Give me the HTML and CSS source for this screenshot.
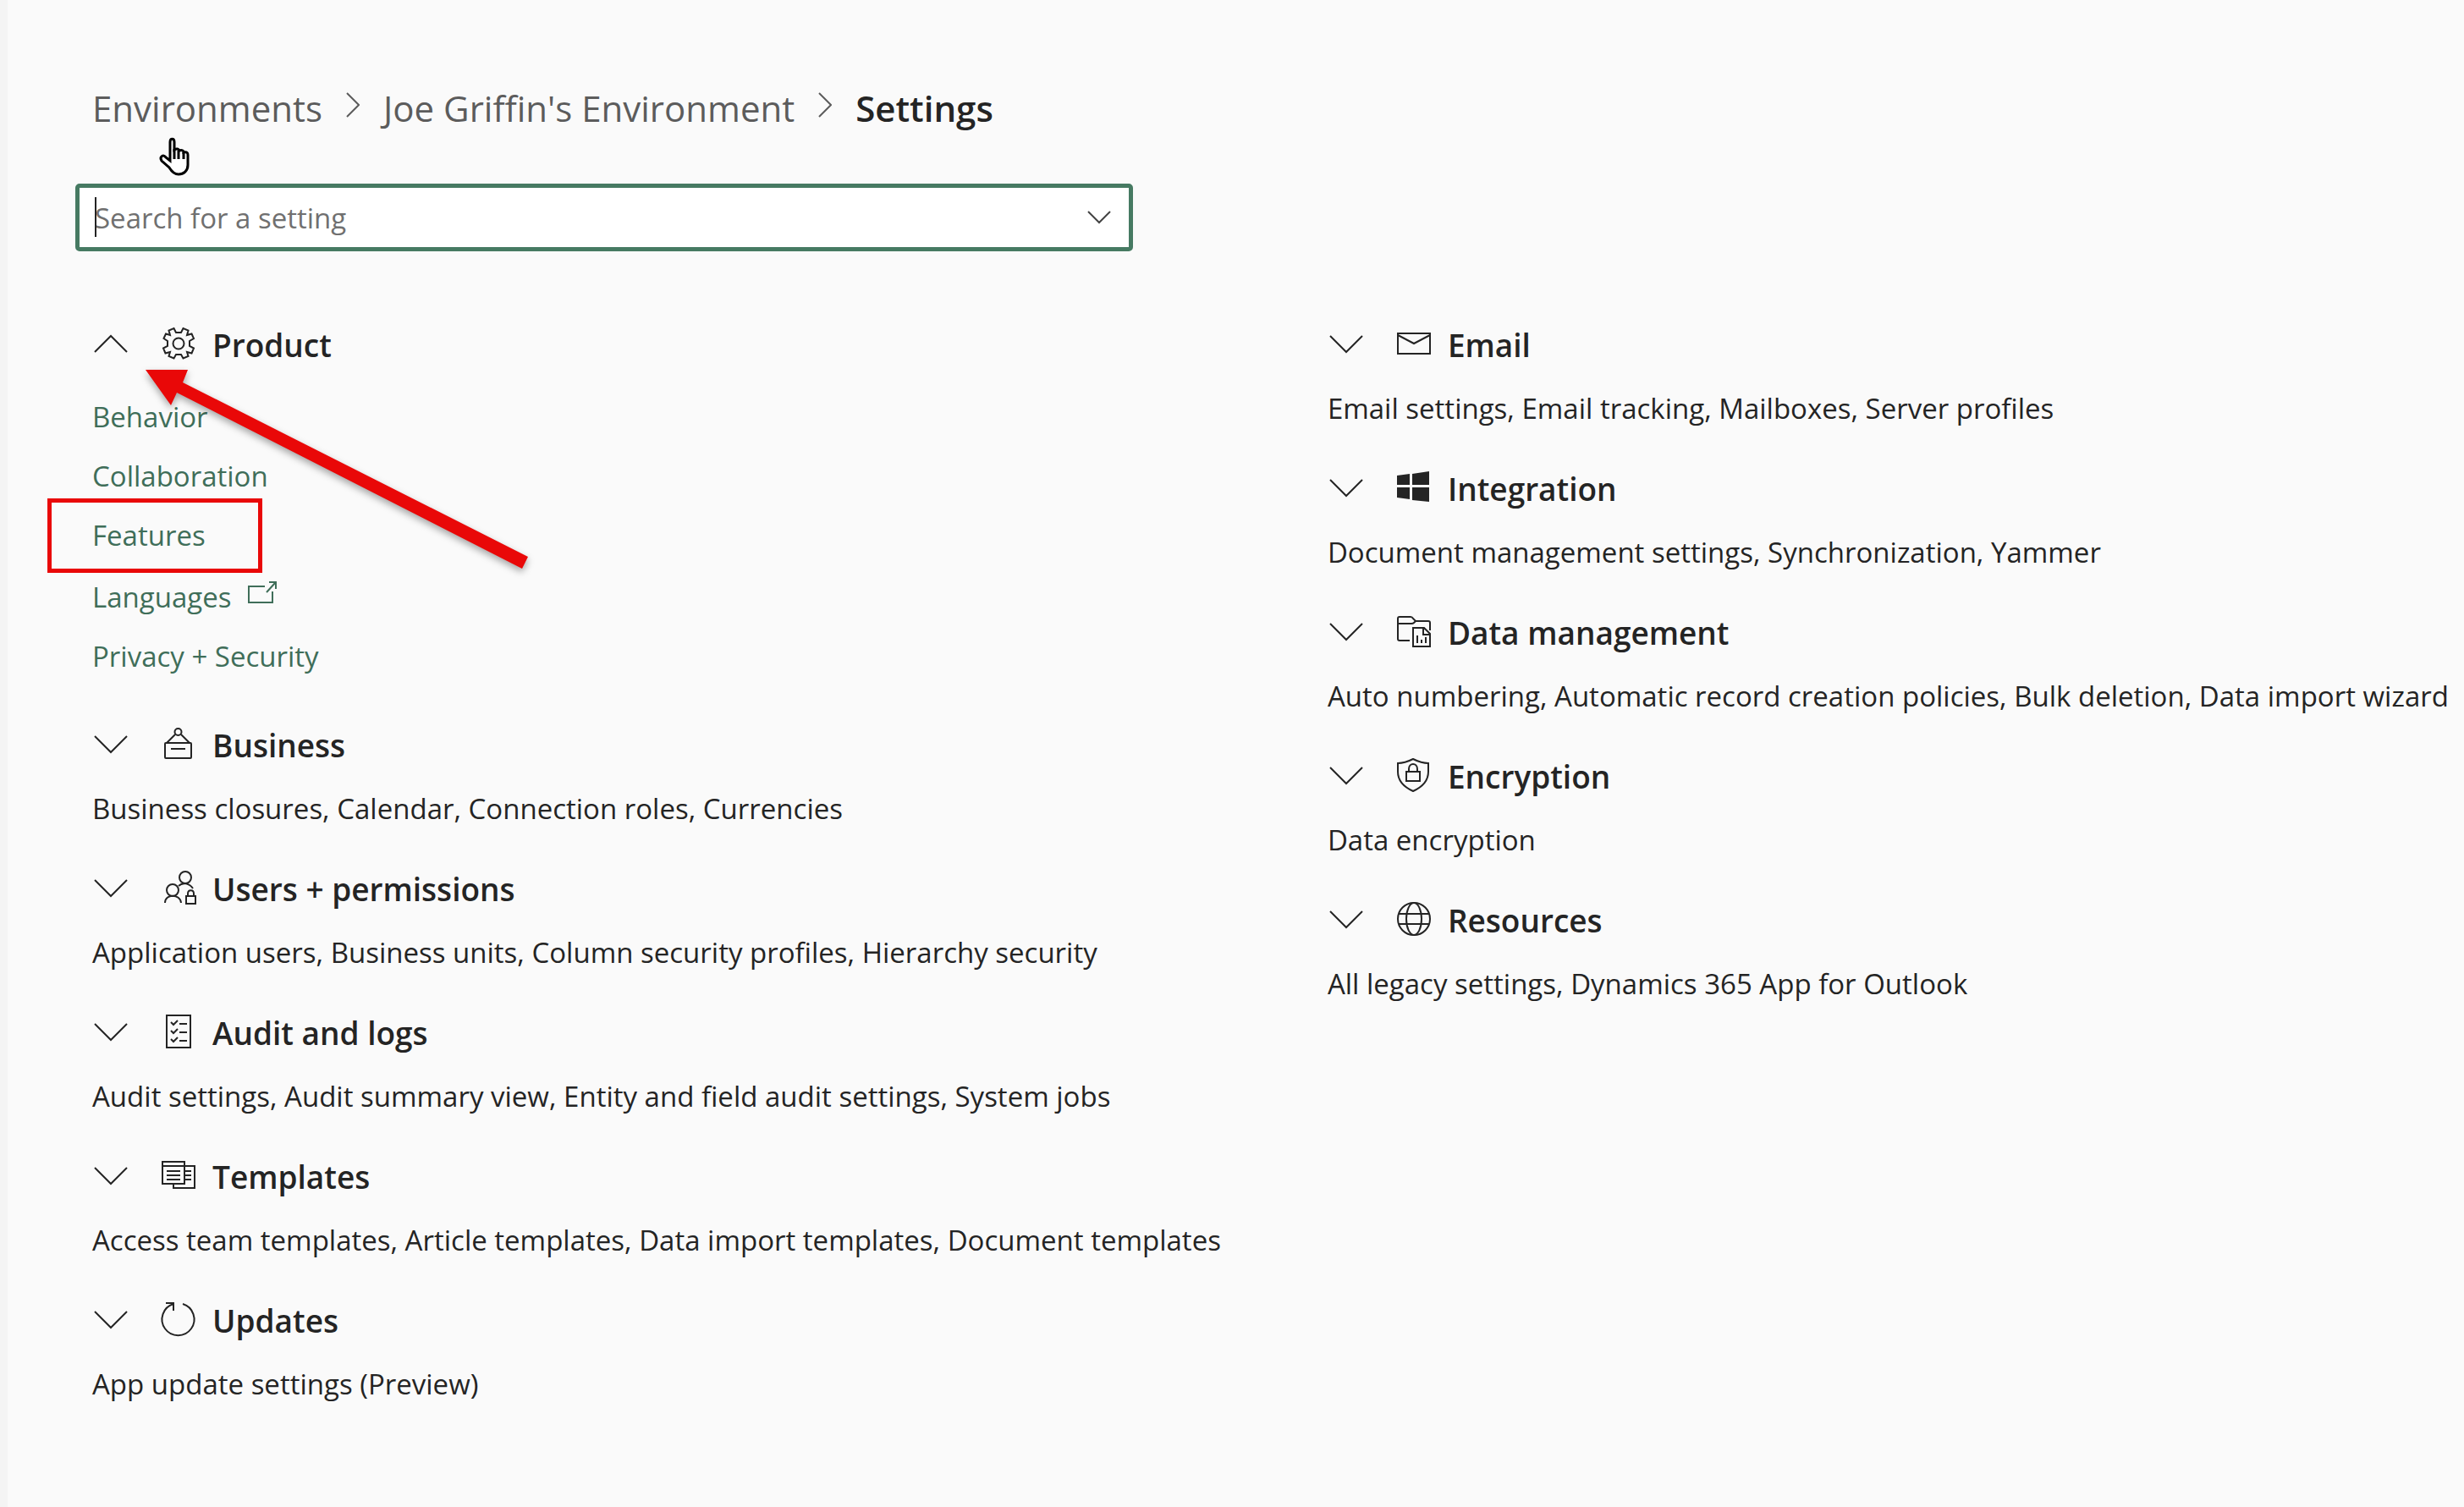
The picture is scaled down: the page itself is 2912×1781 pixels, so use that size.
FILE: index.html
```html
<!DOCTYPE html>
<html lang="en">
<head>
<meta charset="utf-8">
<title>Settings</title>
<link rel="stylesheet" href="styles.css">
</head>
<body>
<svg class="sprite" aria-hidden="true">
  <symbol id="down" viewBox="0 0 40 40"><path d="M1 10 20 29 39 10"/></symbol>
  <symbol id="up" viewBox="0 0 40 40"><path d="M1 29 20 10 39 29"/></symbol>
  <symbol id="next" viewBox="0 0 16 30"><path d="M1 1 15 15 1 29"/></symbol>
</svg>
<main class="page">
  <nav class="crumbs" aria-label="Breadcrumb">
    <a href="#">Environments</a>
    <svg class="crumb-sep"><use href="#next"/></svg>
    <a href="#">Joe Griffin's Environment</a>
    <svg class="crumb-sep"><use href="#next"/></svg>
    <span class="current" aria-current="page">Settings</span>
    <svg class="pointer" viewBox="0 0 36 46" aria-hidden="true"><path d="M12 27V5c0-5 5-5 5 0v9c3-2 5-1 6 1 3-1 5 0 5 2 4-1 5 1 5 3v12c0 7-5 11-11 11-5 0-8-3-11-8L2 27c-3-5 2-8 5-4z"/><path class="fingers" d="M17 13v12M22 15v10M28 17v8"/></svg>
  </nav>
  <div class="search">
    <input type="text" id="search" aria-label="Search for a setting" placeholder="Search for a setting">
    <span class="caret"></span>
    <button type="button" class="drop" aria-label="Show settings"><svg viewBox="0 0 28 16"><path d="M1 1 14 14 27 1"/></svg></button>
  </div>
  <div class="columns">
    <div class="column">
      <section class="group">
        <h2><button type="button" aria-expanded="true"><svg class="chev"><use href="#up"/></svg><svg class="icon" viewBox="0 0 40 40"><path d="M17 7 14.500 2 8.500 4.500 10 10 5 8.500 2.500 14 7 17v6L2 25.500 4.500 31.500 10 30 8.500 35 14.500 37.500 17 33h6l2.500 4.500 6-2.500L30 30l5.500 1.500 2.500-6L33 23v-6l5-3-2.500-5.500L30 10l1.500-5.500-6-2.500L23 7z"/><circle cx="20" cy="20" r="6.500"/></svg>Product</button></h2>
        <ul class="links">
          <li><a href="#">Behavior</a></li>
          <li><a href="#">Collaboration</a></li>
          <li class="marked"><a href="#">Features</a></li>
          <li class="external"><a href="#">Languages<svg class="open" viewBox="0 0 34 26"><path d="M20 6H1v19h28V12M22 13 32 2M25 1h8v8"/></svg></a></li>
          <li><a href="#">Privacy + Security</a></li>
        </ul>
        <svg class="arrow" viewBox="0 0 470 250" aria-hidden="true"><path d="M6 5H56L50 20 458 226 451 240 43 32 36 47z"/></svg>
      </section>
      <section class="group">
        <h2><button type="button" aria-expanded="false"><svg class="chev"><use href="#down"/></svg><svg class="icon" viewBox="0 0 40 40"><rect x="4" y="19" width="31" height="18" rx="1"/><circle cx="19.500" cy="6" r="4"/><path d="M16 9 6 19M23 9l10 10M11 26h17"/></svg>Business</button></h2>
        <p>Business closures, Calendar, Connection roles, Currencies</p>
      </section>
      <section class="group">
        <h2><button type="button" aria-expanded="false"><svg class="chev"><use href="#down"/></svg><svg class="icon" viewBox="0 0 40 40"><circle cx="28" cy="8" r="7"/><circle cx="13" cy="23" r="7"/><path d="M4 38c0-11 18-11 19 0M20 18c5-5 13-3 17 3M29 30h11v9H29zM31 30v-3c0-5 7-5 7 0v3"/></svg>Users + permissions</button></h2>
        <p>Application users, Business units, Column security profiles, Hierarchy security</p>
      </section>
      <section class="group">
        <h2><button type="button" aria-expanded="false"><svg class="chev"><use href="#down"/></svg><svg class="icon" viewBox="0 0 40 40"><path d="M6 1h28v38H6zM11 9l3 3 5-5M11 19l3 3 5-5M11 29l3 3 5-5M21 11h9M21 21h9M21 31h9"/></svg>Audit and logs</button></h2>
        <p>Audit settings, Audit summary view, Entity and field audit settings, System jobs</p>
      </section>
      <section class="group">
        <h2><button type="button" aria-expanded="false"><svg class="chev"><use href="#down"/></svg><svg class="icon" viewBox="0 0 40 40"><path d="M1 4h26v26H1zM1 9h26M6 15h16M6 20h16M6 25h16M27 9h12v26H14v-5M27 15h8M27 20h8M27 25h8"/></svg>Templates</button></h2>
        <p>Access team templates, Article templates, Data import templates, Document templates</p>
      </section>
      <section class="group">
        <h2><button type="button" aria-expanded="false"><svg class="chev"><use href="#down"/></svg><svg class="icon" viewBox="0 0 40 40"><path d="M25 2A19 19 0 1 1 14 2M5 1h9v9"/></svg>Updates</button></h2>
        <p>App update settings (Preview)</p>
      </section>
    </div>
    <div class="column">
      <section class="group">
        <h2><button type="button" aria-expanded="false"><svg class="chev"><use href="#down"/></svg><svg class="icon" viewBox="0 0 40 40"><path d="M1 8h38v24H1zM1 10l19 10 19-10"/></svg>Email</button></h2>
        <p>Email settings, Email tracking, Mailboxes, Server profiles</p>
      </section>
      <section class="group">
        <h2><button type="button" aria-expanded="false"><svg class="chev"><use href="#down"/></svg><svg class="icon solid" viewBox="0 0 40 40"><path d="M0 6 15 4v13H0zM18 4l20-3v16H18zM0 20h15v14L0 32zM18 20h20v17l-20-2z"/></svg>Integration</button></h2>
        <p>Document management settings, Synchronization, Yammer</p>
      </section>
      <section class="group">
        <h2><button type="button" aria-expanded="false"><svg class="chev"><use href="#down"/></svg><svg class="icon" viewBox="0 0 40 40"><path d="M15 31H3q-2 0-2-2V5q0-2 2-2h13q2 0 3 2l3 3h15q2 0 2 2v9M1 11h16q2 0 3-1l2-2M19 16h13l7 7v15H19zM31 16v8h8M24 25v9M29 30v4M34 27v7"/></svg>Data management</button></h2>
        <p>Auto numbering, Automatic record creation policies, Bulk deletion, Data import wizard</p>
      </section>
      <section class="group">
        <h2><button type="button" aria-expanded="false"><svg class="chev"><use href="#down"/></svg><svg class="icon" viewBox="0 0 40 40"><path d="M1 6c7 0 12-2 18-5 6 3 11 5 18 5v10c0 10-7 18-18 23C8 34 1 26 1 16zM11 16h16v11H11zM14 16v-3c0-8 10-8 10 0v3"/></svg>Encryption</button></h2>
        <p>Data encryption</p>
      </section>
      <section class="group">
        <h2><button type="button" aria-expanded="false"><svg class="chev"><use href="#down"/></svg><svg class="icon" viewBox="0 0 40 40"><circle cx="20" cy="20" r="19"/><ellipse cx="20" cy="20" rx="9" ry="19"/><path d="M2 14h36M2 26h36"/></svg>Resources</button></h2>
        <p>All legacy settings, Dynamics 365 App for Outlook</p>
      </section>
    </div>
  </div>
</main>
</body>
</html>
```
FILE: styles.css
```css
*, *::before, *::after { box-sizing: border-box; }
body {
  margin: 0;
  min-height: 100vh;
  border-left: 9px solid #f4f4f4;
  background: #fafafa;
  color: #242424;
  font-family: "Open Sans", "Noto Sans", sans-serif;
  font-size: 33px;
  line-height: 50px;
}
a { color: inherit; text-decoration: none; }
button { border: 0; padding: 0; background: none; color: inherit; font: inherit; cursor: pointer; }
svg { flex: none; fill: none; stroke: currentColor; stroke-width: 2; overflow: visible; }
.sprite { position: absolute; width: 0; height: 0; }
.page { padding: 98px 0 100px 100px; }

.crumbs { position: relative; display: flex; align-items: center; gap: 28px; font-size: 42px; line-height: 60px; color: #5c5c5c; white-space: nowrap; }
.crumb-sep { width: 16px; height: 30px; margin-bottom: 8px; }
.current { color: #242424; font-weight: 600; }
.pointer { position: absolute; left: 80px; top: 65px; width: 36px; height: 46px; fill: #fff; stroke: #000; stroke-width: 3; }

.search { position: relative; display: flex; width: 1250px; max-width: 100%; height: 80px; margin: 59px 0 0 -20px; }
.search input { width: 100%; padding: 2px 80px 0 18px; border: 5px solid #467a62; border-radius: 5px; background: #fff; color: #242424; font: inherit; outline: 0; }
.search input::placeholder { color: #707070; opacity: 1; }
.caret { position: absolute; left: 23px; top: 16px; width: 2px; height: 47px; background: #242424; }
.drop { position: absolute; right: 26px; top: 0; height: 80px; }
.drop svg { display: block; width: 28px; height: 16px; color: #424242; }

.columns { display: grid; grid-template-columns: 25fr 23fr; margin-top: 81px; }
.column { display: flex; flex-direction: column; gap: 40px; min-width: 0; }
.group { position: relative; }
h2 { margin: 0 0 20px; font-size: 37px; line-height: 60px; font-weight: 600; }
h2 button { display: flex; align-items: center; white-space: nowrap; }
.chev { width: 40px; height: 40px; margin: 0 40px 2px 2px; }
.icon { width: 40px; height: 40px; margin: 0 20px 4px 0; }
.icon.solid { fill: currentColor; stroke: none; }
p { margin: 0; white-space: nowrap; }

.links { margin: 0; padding: 0; list-style: none; color: #3f6e59; line-height: 70px; }
.external { padding-top: 3px; }
.open { width: 34px; height: 26px; margin-left: 20px; vertical-align: 5px; }
.marked { position: relative; }
.marked::after { content: ""; position: absolute; left: -53px; top: -9px; width: 254px; height: 88px; border: 5px solid #e90808; }
.arrow { position: absolute; left: 57px; top: 54px; width: 470px; height: 250px; fill: #e90808; stroke: none; filter: drop-shadow(0 4px 4px rgba(0, 0, 0, .35)); }
```
